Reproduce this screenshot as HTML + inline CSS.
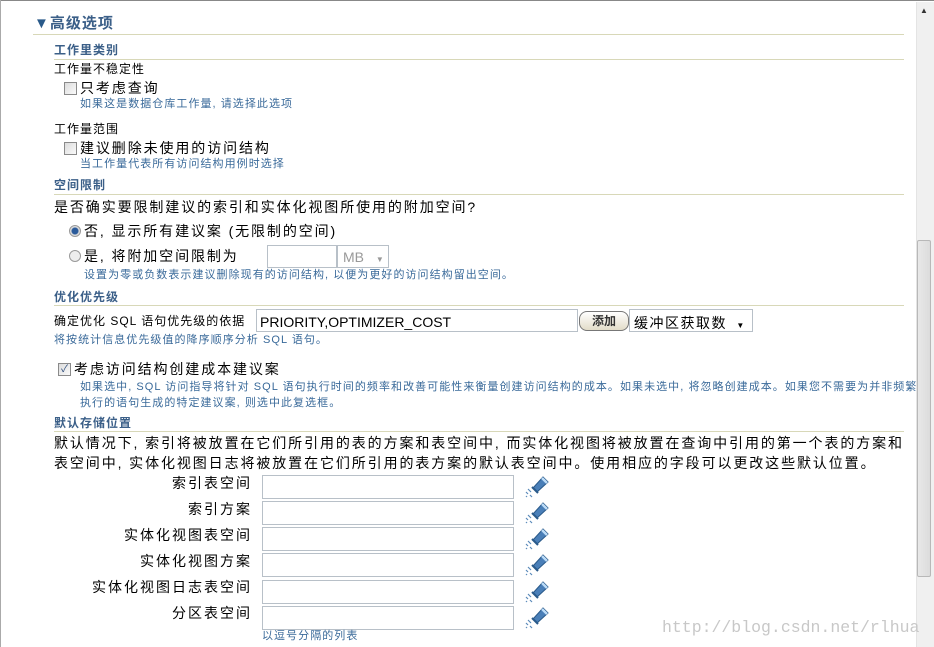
<!DOCTYPE html>
<html><head><meta charset="utf-8"><style>
body{margin:0;width:934px;height:647px;overflow:hidden;background:#fff;font-family:"Liberation Sans","Noto Sans CJK SC",sans-serif;position:relative}
.a{position:absolute;white-space:nowrap}
.t12{font-size:12px;line-height:12px;color:#000;letter-spacing:1px}
.t14{font-size:14px;line-height:14px;color:#000;letter-spacing:1.9px}
.h{font-size:12px;line-height:12px;color:#3b5f88;font-weight:bold;letter-spacing:1px}
.hp{font-size:11px;line-height:11px;color:#3a6a9a;letter-spacing:1.05px}
.ln{position:absolute;height:1px;background:#d8d8b8}
.cb{position:absolute;width:11px;height:11px;border:1px solid #8a8a8a;background:linear-gradient(135deg,#dcdcdc,#fafafa)}
.rd{position:absolute;width:10px;height:10px;border:1px solid #999;border-radius:50%;background:#eee}
.in{position:absolute;border:1px solid #b8c0c8;background:#fff;box-sizing:border-box}
.lbl{position:absolute;width:202px;text-align:right;left:50px;font-size:14px;line-height:14px;letter-spacing:2px}
</style></head><body>
<div style="position:absolute;left:0;top:0;width:934px;height:1px;background:#888"></div>
<div style="position:absolute;left:0;top:0;width:1px;height:647px;background:#aaa"></div>
<div style="position:absolute;left:916px;top:2px;width:17px;height:645px;background:#f0f0f0;border-left:1px solid #e4e4e4"></div>
<div class="a" style="left:920px;top:6px;font-size:8px;color:#333">▲</div>
<div style="position:absolute;left:917px;top:240px;width:14px;height:337px;background:linear-gradient(90deg,#e8e8e8,#dcdcdc);border:1px solid #b8b8b8;border-radius:2px;box-sizing:border-box"></div>

<div class="a" style="left:34px;top:16px;font-size:15px;line-height:16px;color:#3b5f88;font-weight:bold;letter-spacing:1px"><span style="color:#2a5a8a">▼</span>高级选项</div>
<div class="ln" style="left:33px;top:34px;width:871px"></div>

<div class="a h" style="left:54px;top:44px">工作里类别</div>
<div class="ln" style="left:54px;top:59px;width:850px"></div>
<div class="a t12" style="left:54px;top:63px">工作量不稳定性</div>
<div class="cb" style="left:64px;top:82px"></div>
<div class="a t14" style="left:80px;top:81px">只考虑查询</div>
<div class="a hp" style="left:80px;top:99px">如果这是数据仓库工作量, 请选择此选项</div>
<div class="a t12" style="left:54px;top:123px">工作量范围</div>
<div class="cb" style="left:64px;top:142px"></div>
<div class="a t14" style="left:80px;top:141px">建议删除未使用的访问结构</div>
<div class="a hp" style="left:80px;top:159px">当工作量代表所有访问结构用例时选择</div>

<div class="a h" style="left:54px;top:179px">空间限制</div>
<div class="ln" style="left:54px;top:194px;width:850px"></div>
<div class="a t14" style="left:54px;top:200px">是否确实要限制建议的索引和实体化视图所使用的附加空间?</div>
<div class="rd" style="left:69px;top:225px;background:radial-gradient(circle,#2a5a9a 0 3px,#ddd 4px)"></div>
<div class="a t14" style="left:84px;top:224px">否, 显示所有建议案 (无限制的空间)</div>
<div class="rd" style="left:69px;top:250px"></div>
<div class="a t14" style="left:84px;top:249px">是, 将附加空间限制为</div>
<div class="in" style="left:267px;top:245px;width:70px;height:23px"></div>
<div class="in" style="left:337px;top:245px;width:52px;height:23px;color:#999;font-size:14px;padding:3px 0 0 5px">MB <span style="font-size:8px;margin-left:8px">▼</span></div>
<div class="a hp" style="left:84px;top:270px">设置为零或负数表示建议删除现有的访问结构, 以便为更好的访问结构留出空间。</div>

<div class="a h" style="left:54px;top:291px">优化优先级</div>
<div class="ln" style="left:54px;top:305px;width:850px"></div>
<div class="a t12" style="left:54px;top:315px">确定优化 SQL 语句优先级的依据</div>
<div class="in" style="left:256px;top:309px;width:322px;height:23px;font-size:14px;padding:4px 0 0 3px">PRIORITY,OPTIMIZER_COST</div>
<div style="position:absolute;left:579px;top:311px;width:48px;height:18px;border:1px solid #777;border-radius:8px;background:linear-gradient(#fff,#e2dcc8);font-size:12px;font-weight:bold;text-align:center;line-height:18px;color:#333">添加</div>
<div class="in" style="left:629px;top:309px;width:124px;height:23px;font-size:14px;padding:3px 0 0 4px;letter-spacing:1.5px">缓冲区获取数 <span style="font-size:8px;margin-left:4px">▼</span></div>
<div class="a hp" style="left:54px;top:335px">将按统计信息优先级值的降序顺序分析 SQL 语句。</div>

<div class="cb" style="left:58px;top:363px;font-size:10px;line-height:11px;text-align:center;color:#2a4a7a">✓</div>
<div class="a t14" style="left:74px;top:362px">考虑访问结构创建成本建议案</div>
<div class="a hp" style="left:80px;top:382px">如果选中, SQL 访问指导将针对 SQL 语句执行时间的频率和改善可能性来衡量创建访问结构的成本。如果未选中, 将忽略创建成本。如果您不需要为并非频繁</div>
<div class="a hp" style="left:80px;top:398px">执行的语句生成的特定建议案, 则选中此复选框。</div>

<div class="a h" style="left:54px;top:417px">默认存储位置</div>
<div class="ln" style="left:54px;top:431px;width:850px"></div>
<div class="a t14" style="left:54px;top:436px">默认情况下, 索引将被放置在它们所引用的表的方案和表空间中, 而实体化视图将被放置在查询中引用的第一个表的方案和</div>
<div class="a t14" style="left:54px;top:456px">表空间中, 实体化视图日志将被放置在它们所引用的表方案的默认表空间中。使用相应的字段可以更改这些默认位置。</div>

<div class="lbl" style="top:476px">索引表空间</div>
<div class="lbl" style="top:502px">索引方案</div>
<div class="lbl" style="top:528px">实体化视图表空间</div>
<div class="lbl" style="top:554px">实体化视图方案</div>
<div class="lbl" style="top:580px">实体化视图日志表空间</div>
<div class="lbl" style="top:606px">分区表空间</div>

<div class="in" style="left:262px;top:475px;width:252px;height:24px"></div>
<div class="in" style="left:262px;top:501px;width:252px;height:24px"></div>
<div class="in" style="left:262px;top:527px;width:252px;height:24px"></div>
<div class="in" style="left:262px;top:553px;width:252px;height:24px"></div>
<div class="in" style="left:262px;top:580px;width:252px;height:24px"></div>
<div class="in" style="left:262px;top:606px;width:252px;height:24px"></div>

<svg style="position:absolute;left:522px;top:474px" width="30" height="160">
<defs><g id="f"><path d="M11 14 L21 3 L26 8 L15 18 Z" fill="#4a7fb8" stroke="#2a5a8a" stroke-width="1"/><path d="M20 4 L25 9" stroke="#bcdcf8" stroke-width="2.5"/><path d="M10 13 L16 19" stroke="#2a5a8a" stroke-width="2"/><path d="M6 15 l3 3 M4 18 l2 2 M8 21 l2 2 M4 22 l1 1" stroke="#5a8aba" stroke-width="1.2"/></g></defs>
<use href="#f" y="0"/><use href="#f" y="26"/><use href="#f" y="52"/><use href="#f" y="78"/><use href="#f" y="105"/><use href="#f" y="131"/>
</svg>

<div class="a hp" style="left:262px;top:631px">以逗号分隔的列表</div>
<div class="a" style="left:662px;top:618px;font-family:'Liberation Mono',monospace;font-size:16.5px;color:#c8c8c8">http://blog.csdn.net/rlhua</div>
</body></html>
